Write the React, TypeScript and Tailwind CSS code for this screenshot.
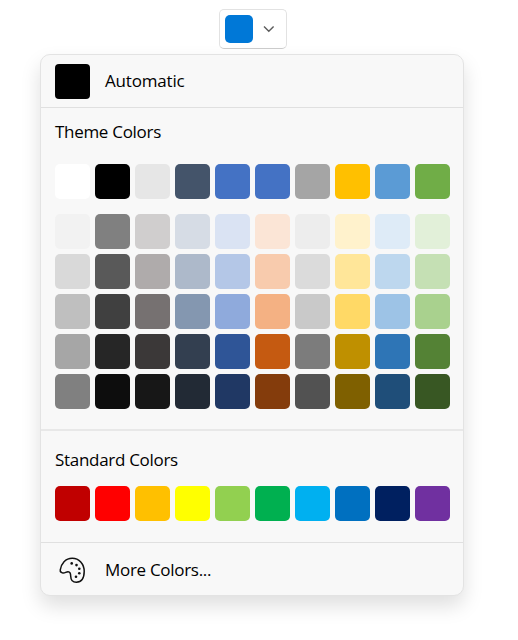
const themeBase = ['#ffffff', '#000000', '#e6e6e6', '#44546a', '#4472c4', '#4472c4', '#a5a5a5', '#ffc000', '#5b9bd5', '#70ad47'];

const themeShades = [
  ['#f2f2f2', '#808080', '#d0cece', '#d6dce5', '#dae3f3', '#fbe5d6', '#ededed', '#fff2cc', '#deebf7', '#e2f0d9'],
  ['#d9d9d9', '#595959', '#afabab', '#adb9ca', '#b4c7e7', '#f8cbad', '#dbdbdb', '#ffe699', '#bdd7ee', '#c5e0b4'],
  ['#bfbfbf', '#404040', '#767171', '#8497b0', '#8faadc', '#f4b183', '#c9c9c9', '#ffd966', '#9dc3e6', '#a9d18e'],
  ['#a6a6a6', '#262626', '#3b3838', '#333f50', '#2f5597', '#c55a11', '#7c7c7c', '#bf9000', '#2e75b6', '#548235'],
  ['#808080', '#0d0d0d', '#171717', '#222a35', '#203864', '#843c0c', '#525252', '#7f6000', '#1f4e79', '#385723'],
];

const standard = ['#c00000', '#ff0000', '#ffc000', '#ffff00', '#92d050', '#00b050', '#00b0f0', '#0070c0', '#002060', '#7030a0'];

function Swatches({ colors }: { colors: string[] }) {
  return (
    <div className="flex h-[35px] gap-[5.35px]">
      {colors.map((color, i) => (
        <button
          key={i}
          aria-label={color}
          className="h-[34.65px] w-[34.65px] shrink-0 rounded-[5px]"
          style={{ backgroundColor: color }}
        />
      ))}
    </div>
  );
}

function PaletteIcon() {
  return (
    <svg width="26" height="26" viewBox="0 0 26 26" fill="none" className="block">
      <path
        d="M1.2 13.2C2 6.6 6.6 1.2 13.2 1.2C20 1.2 25.2 6.8 25.2 14.3C25.2 21 22.4 25.2 17.3 25.2C13.6 25.2 11.8 22.6 11.7 19.2C11.6 16.6 11 14.6 9 14.7C6.8 14.9 5.6 16.6 3.4 15.9C1.8 15.4 1 14.5 1.2 13.2Z"
        stroke="#111"
        strokeWidth="1.5"
        strokeLinejoin="round"
      />
      <g fill="#111">
        <circle cx="12.7" cy="6.4" r="1.3" />
        <circle cx="17.5" cy="8.1" r="1.3" />
        <circle cx="20.3" cy="11.7" r="1.3" />
        <circle cx="20.3" cy="16.2" r="1.3" />
        <circle cx="17" cy="19.7" r="1.3" />
      </g>
    </svg>
  );
}

export default function App() {
  return (
    <div className="flex h-[640px] w-[518px] flex-col bg-white pt-[9px] font-['Open_Sans','Noto_Sans',sans-serif] text-[17px] leading-6 text-black">
      <button className="ml-[219px] flex h-10 w-17 items-center rounded-[5px] border border-[#e2e2e2] border-b-[#cccccc] bg-white pl-[5px]">
        <span className="h-[27.6px] w-[27.6px] rounded-[5px] bg-[#0078d7]" />
        <svg width="12" height="8" viewBox="0 0 12 8" fill="none" className="ml-[10px]">
          <path d="M1 1.5L5.8 6.3L10.6 1.5" stroke="#5c5c5c" strokeWidth="1.4" />
        </svg>
      </button>

      <div className="mt-[5px] ml-10 flex h-[542px] w-[424px] flex-col overflow-hidden rounded-[10px] border border-[#e3e3e3] bg-[#f8f8f8] shadow-[0_10px_20px_rgba(0,0,0,0.13)]">
        <div className="flex h-[53px] items-center border-b border-[#e0e0e0] pl-[14px]">
          <span className="h-[35px] w-[35px] rounded-[4px] bg-black" />
          <span className="ml-[15px] tracking-[-0.18px]">Automatic</span>
        </div>

        <div className="flex h-[323px] flex-col border-b-2 border-[#e8e8e8] pt-3 pl-[14px]">
          <h2 className="tracking-[-0.3px]">Theme Colors</h2>
          <div className="mt-5">
            <Swatches colors={themeBase} />
          </div>
          <div className="mt-[15px] flex flex-col gap-[5px]">
            {themeShades.map((row, i) => (
              <Swatches key={i} colors={row} />
            ))}
          </div>
        </div>

        <div className="flex h-[112px] flex-col border-b border-[#e0e0e0] pt-[17px] pl-[14px]">
          <h2 className="tracking-[-0.3px]">Standard Colors</h2>
          <div className="mt-[14px]">
            <Swatches colors={standard} />
          </div>
        </div>

        <div className="flex flex-1 items-center pt-[2px] pl-[18px]">
          <PaletteIcon />
          <span className="ml-5 tracking-[-0.3px]">More Colors...</span>
        </div>
      </div>
    </div>
  );
}
